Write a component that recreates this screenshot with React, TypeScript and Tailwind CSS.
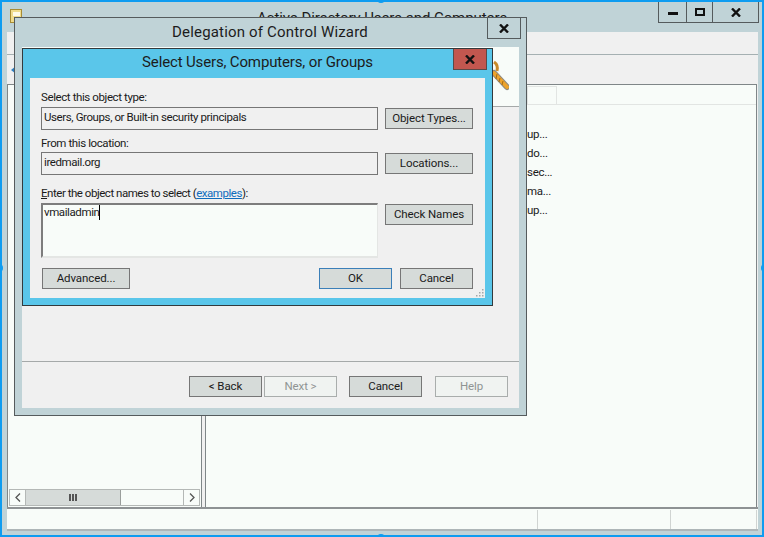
const font = "font-['Roboto','Noto_Sans',sans-serif]";

function Btn({ label, w, primary, disabled }: { label: string; w: string; primary?: boolean; disabled?: boolean }) {
  const tone = disabled
    ? 'border-[#a9adac] bg-[#f0f3f1] text-[#8f9493]'
    : primary
      ? 'border-[#3b7fb8] bg-[#d6dbd9] text-[#1a1a1a]'
      : 'border-[#767676] bg-[#d6dbd9] text-[#1a1a1a]';
  return (
    <div className={`${w} h-[21px] shrink-0 border pt-px flex items-center justify-center text-[11.5px] tracking-[-0.1px] leading-none ${tone}`}>
      {label}
    </div>
  );
}

function X({ size = 10, sw = 2.4 }: { size?: number; sw?: number }) {
  return (
    <svg width={size} height={size - 1} viewBox="0 0 10 9" fill="none" stroke="#111" strokeWidth={sw}>
      <path d="M1 0.5 L9 8.5 M9 0.5 L1 8.5" />
    </svg>
  );
}

function Handle({ cls }: { cls: string }) {
  return <div className={`absolute w-[8px] h-[8px] rounded-full bg-[#0e9cf0] ${cls}`} />;
}

function NameField({ text }: { text: string }) {
  return (
    <div className="w-[337px] h-[23px] border border-[#767676] bg-[#f0f0f0] px-[2px] pb-[2px] flex items-center text-[11.5px] tracking-[-0.4px] text-[#1a1a1a] whitespace-nowrap">
      {text}
    </div>
  );
}

function SelectDialog() {
  return (
    <div className="absolute left-[22px] top-[48px] w-[471px] h-[258px] border border-[#333a3d] bg-[#5ac6ea] flex flex-col">
      <div className="h-[29px] shrink-0 relative flex items-center justify-center text-[15px] tracking-[-0.15px] text-[#1c1c1c] pb-[2px]">
        Select Users, Computers, or Groups
        <div className="absolute right-[5px] top-0 w-[34px] h-[21px] bg-[#c2574f] border border-[#5a4a48] border-t-0 flex items-center justify-center">
          <X />
        </div>
      </div>
      <div className="mx-[7px] h-[220px] bg-[#f0f0f0] pl-[11px] pr-[12px] pt-[12px] relative text-[11.5px] tracking-[-0.4px] text-[#1a1a1a]">
        <div className="h-[17px] leading-[14px]">Select this object type:</div>
        <div className="flex items-center gap-[7px]">
          <NameField text="Users, Groups, or Built-in security principals" />
          <Btn label="Object Types..." w="w-[88px]" />
        </div>
        <div className="h-[22px] pt-[7px] leading-[13px]">From this location:</div>
        <div className="flex items-center gap-[7px]">
          <NameField text="iredmail.org" />
          <Btn label="Locations..." w="w-[88px]" />
        </div>
        <div className="h-[28px] pt-[11px] leading-[14px] tracking-[-0.47px]">
          <span className="underline">E</span>nter the object names to select (<span className="text-[#0f6cbd] underline">examples</span>):
        </div>
        <div className="flex items-start gap-[7px]">
          <div className="w-[337px] h-[55px] border-2 border-[#7d7d7d] border-r-[#e4e6e4] border-b-[#e4e6e4] border-r bg-[#f8fcf9] pl-[1px] leading-[14px] flex items-start">
            <span>vmailadmin</span>
            <span className="w-px h-[15px] bg-black" />
          </div>
          <div className="pt-[1px]">
            <Btn label="Check Names" w="w-[88px]" />
          </div>
        </div>
        <div className="mt-[10px] flex pl-px">
          <Btn label="Advanced..." w="w-[88px]" />
          <div className="ml-auto flex gap-[8px]">
            <Btn label="OK" w="w-[73px]" primary />
            <Btn label="Cancel" w="w-[73px]" />
          </div>
        </div>
        <svg className="absolute right-[1px] bottom-[1px]" width="9" height="9" viewBox="0 0 9 9" fill="#a4a8a8">
          <rect x="7" y="1" width="1.5" height="1.5" />
          <rect x="4" y="4" width="1.5" height="1.5" />
          <rect x="7" y="4" width="1.5" height="1.5" />
          <rect x="1" y="7" width="1.5" height="1.5" />
          <rect x="4" y="7" width="1.5" height="1.5" />
          <rect x="7" y="7" width="1.5" height="1.5" />
        </svg>
      </div>
    </div>
  );
}

function WizardDialog() {
  return (
    <div className="absolute left-[14px] top-[17px] w-[513px] h-[399px] border border-[#555b5d] bg-[#c0d3d7] flex flex-col">
      <div className="h-[29px] shrink-0 relative flex items-center justify-center text-[15px] tracking-[0.18px] text-[#1c1c1c] pb-[1px] pr-[1px]">
        Delegation of Control Wizard
        <div className="absolute right-[5px] top-0 w-[34px] h-[21px] border border-[#555b5d] border-t-0 flex items-center justify-center">
          <X />
        </div>
      </div>
      <div className="mx-[7px] h-[361px] bg-[#f0f0f0] flex flex-col">
        <div className="h-[60px] shrink-0 bg-[#f8fcf9] border-b border-[#a5a9a9] flex justify-end pr-[10px] pt-[12px]">
          <svg width="18" height="32" viewBox="0 0 18 32" fill="none">
            <path d="M3 3 C6 5 7 8 6 12" stroke="#c98a2a" strokeWidth="3" />
            <path d="M3 14 L16 28" stroke="#8f8a80" strokeWidth="6" strokeLinecap="round" />
            <path d="M3 14 L16 28" stroke="#eda32c" strokeWidth="4" strokeLinecap="round" />
            <path d="M6 15 L5 20 M9 19 L8 23 M12 22 L11 26" stroke="#a86c12" strokeWidth="1" />
          </svg>
        </div>
        <div className="flex-1" />
        <div className="h-[47px] shrink-0 border-t border-[#a5a9a9] flex pt-[14px] pl-[167px]">
          <Btn label="< Back" w="w-[73px]" />
          <div className="ml-[2px]"><Btn label="Next >" w="w-[73px]" disabled /></div>
          <div className="ml-[12px]"><Btn label="Cancel" w="w-[73px]" /></div>
          <div className="ml-[13px]"><Btn label="Help" w="w-[73px]" disabled /></div>
        </div>
      </div>
    </div>
  );
}

export default function App() {
  return (
    <div className={`relative w-[764px] h-[537px] overflow-hidden bg-[#c0d3d7] border-2 border-[#0e9cf0] ${font} flex flex-col`}>
      {/* main title bar */}
      <div className="h-[30px] shrink-0 relative flex items-start justify-center pt-[5px] text-[15px] tracking-[-0.08px] text-[#1c1c1c]">
        <svg className="absolute left-[8px] top-[7px]" width="13" height="14" viewBox="0 0 13 14">
          <rect x="0.5" y="0.5" width="11" height="13" fill="#f0dc8c" stroke="#a88c34" />
          <rect x="3" y="3" width="7" height="4" fill="#fffbe8" />
        </svg>
        Active Directory Users and Computers
        <div className="absolute right-[3px] top-0 h-[21px] w-[101px] border border-[#555b5d] border-t-0 flex">
          <div className="w-[28px] border-r border-[#555b5d] flex items-center justify-center">
            <div className="w-[10px] h-[3px] bg-[#111] mt-[3px]" />
          </div>
          <div className="w-[26px] border-r border-[#555b5d] flex items-center justify-center">
            <div className="w-[10px] h-[8px] border-2 border-[#111] mb-[1px]" />
          </div>
          <div className="flex-1 flex items-center justify-center">
            <X />
          </div>
        </div>
      </div>
      {/* content */}
      <div className="ml-[5px] mr-[4px] flex-1 flex flex-col bg-[#f0f0f0]">
        <div className="h-[23px] shrink-0 border-b border-[#a5b0b2]" />
        <div className="h-[29px] shrink-0 pl-[4px] flex items-center">
          <svg width="5" height="8" viewBox="0 0 5 8" fill="#2f7fc0"><path d="M5 0 L0 4 L5 8 Z" /></svg>
        </div>
        <div className="flex-1 flex gap-[3px] min-h-0 pr-[1px]">
          <div className="w-[195px] border border-[#7f8688] border-b-0 bg-[#f8fcf9] flex flex-col justify-end pl-[1px] pr-[1px]">
            <div className="h-[17px] mb-[1px] border border-[#b4b8b6] flex items-stretch bg-[#f8fcf9]">
              <div className="w-[16px] flex items-center justify-center border-r border-[#b4b8b6]">
                <svg width="6" height="9" viewBox="0 0 6 9" fill="none" stroke="#555" strokeWidth="1.3"><path d="M5 0.5 L1 4.5 L5 8.5" /></svg>
              </div>
              <div className="w-[95px] bg-[#d6dbd9] border-r border-[#9a9e9c] flex items-center justify-center">
                <svg width="8" height="7" viewBox="0 0 8 7" fill="#555"><rect x="0" width="2" height="7" /><rect x="3" width="2" height="7" /><rect x="6" width="2" height="7" /></svg>
              </div>
              <div className="flex-1" />
              <div className="w-[16px] flex items-center justify-center border-l border-[#b4b8b6]">
                <svg width="6" height="9" viewBox="0 0 6 9" fill="none" stroke="#555" strokeWidth="1.3"><path d="M1 0.5 L5 4.5 L1 8.5" /></svg>
              </div>
            </div>
          </div>
          <div className="flex-1 border border-[#7f8688] border-b-0 bg-[#f8fcf9] text-[11.5px] tracking-[-0.3px] text-[#1a1a1a]">
            <div className="h-[20px] border-b border-[#e2e5e3] flex">
              <div className="ml-[321px] w-[30px] border-x border-[#e2e5e3] border-t h-[19px] mt-px" />
            </div>
            <div className="pt-[20px] pl-[321px] leading-[19px]">
              <div>up...</div>
              <div>do...</div>
              <div>sec...</div>
              <div>ma...</div>
              <div>up...</div>
            </div>
          </div>
        </div>
        <div className="h-[24px] shrink-0 border-t-2 border-[#8e9294] border-b-2 border-b-[#aeb6b8] bg-[#f8fcf9] flex justify-end">
          <div className="w-[133px] border-l border-[#d0d4d2] mt-[1px]" />
          <div className="w-[87px] border-l border-[#d0d4d2] border-r mt-[1px] mr-[1px]" />
        </div>
      </div>
      <div className="h-[4px] shrink-0" />
      <div className="absolute -left-[2px] -top-[2px]">
        <div className="relative w-[764px] h-[537px]">
          <WizardDialog />
          <SelectDialog />
          <Handle cls="-left-[5px] top-[264px]" />
          <Handle cls="-right-[5px] top-[264px]" />
          <Handle cls="left-[377px] -top-[5px]" />
          <Handle cls="left-[377px] -bottom-[5px]" />
        </div>
      </div>
    </div>
  );
}
